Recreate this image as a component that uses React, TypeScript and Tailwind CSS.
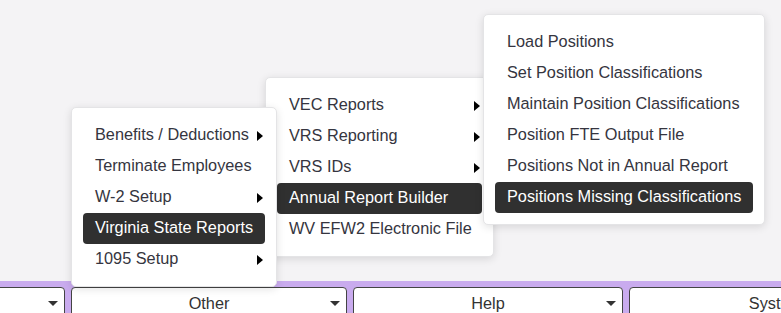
import React from "react";

type Item = { label: string; sub?: boolean; active?: boolean };

const benefitsMenu: Item[] = [
  { label: "Benefits / Deductions", sub: true },
  { label: "Terminate Employees" },
  { label: "W-2 Setup", sub: true },
  { label: "Virginia State Reports", active: true },
  { label: "1095 Setup", sub: true },
];

const stateMenu: Item[] = [
  { label: "VEC Reports", sub: true },
  { label: "VRS Reporting", sub: true },
  { label: "VRS IDs", sub: true },
  { label: "Annual Report Builder", active: true },
  { label: "WV EFW2 Electronic File" },
];

const annualMenu: Item[] = [
  { label: "Load Positions" },
  { label: "Set Position Classifications" },
  { label: "Maintain Position Classifications" },
  { label: "Position FTE Output File" },
  { label: "Positions Not in Annual Report" },
  { label: "Positions Missing Classifications", active: true },
];

function MenuRow({ item }: { item: Item }) {
  return (
    <div
      className={
        item.active
          ? "h-[31px] flex items-center rounded-[4px] pl-[12px] pr-[2px] pb-[2px] bg-[#303030] text-white"
          : "h-[31px] flex items-center rounded-[4px] pl-[12px] pr-[2px] pb-[2px] text-[#353540]"
      }
    >
      <span className="flex-1 whitespace-nowrap">{item.label}</span>
      {item.sub && !item.active && (
        <span className="w-0 h-0 mt-[2px] border-y-[5px] border-y-transparent border-l-[6px] border-l-black" />
      )}
    </div>
  );
}

function Menu({ items, className }: { items: Item[]; className: string }) {
  return (
    <div
      className={
        "absolute bg-white border border-[#e4e4e6] rounded-[5px] px-[11px] pt-[12px] pb-[11px] shadow-[0_2px_8px_rgba(0,0,0,0.12)] " +
        className
      }
    >
      {items.map((it) => (
        <MenuRow key={it.label} item={it} />
      ))}
    </div>
  );
}

function BarButton({ label, className }: { label: string; className: string }) {
  return (
    <div
      className={
        "shrink-0 h-[40px] bg-white border border-[#444] rounded-t-[4px] pt-[6px] px-[6px] " +
        className
      }
    >
      <div className="h-[18px] flex items-center">
        <span className="flex-1" />
        <span className="whitespace-nowrap">{label}</span>
        <span className="flex-1 flex justify-end">
          <span className="w-0 h-0 border-x-[5px] border-x-transparent border-t-[5px] border-t-[#333]" />
        </span>
      </div>
    </div>
  );
}

export default function App() {
  return (
    <div className="relative w-full h-[313px] overflow-hidden bg-[#f4f3f5] flex flex-col font-['Liberation_Sans',Arial,sans-serif] text-[16.3px]">
      <div className="mt-auto h-[32px] bg-[#c9abee] pt-[6px] flex gap-[6px] overflow-hidden text-[#333]">
        <BarButton label="" className="w-[277px] -ml-[212px]" />
        <BarButton label="Other" className="w-[276px]" />
        <BarButton label="Help" className="w-[270px]" />
        <BarButton label="System" className="w-[294px]" />
      </div>

      <Menu items={stateMenu} className="left-[265px] top-[77px] w-[229px] z-10" />
      <Menu items={benefitsMenu} className="left-[71px] top-[107px] w-[206px] z-20" />
      <Menu items={annualMenu} className="left-[483px] top-[14px] w-[282px] z-20" />
    </div>
  );
}
